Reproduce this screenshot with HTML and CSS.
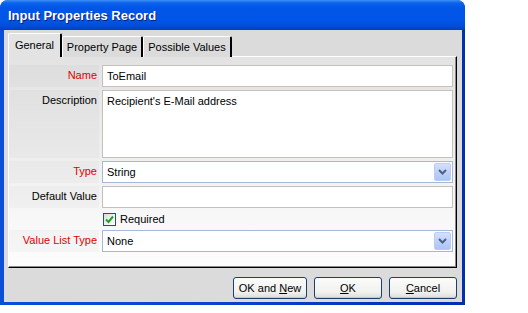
FILE: index.html
```html
<!DOCTYPE html>
<html lang="en">

<head>
    <meta charset="UTF-8">
    <title>Input Properties Record</title>
    <link rel="stylesheet" href="styles.css">
</head>

<body>
    <div class="window">
        <div class="titlebar">Input Properties Record</div>
        <div class="client">
            <div class="tabs">
                <div class="tab active tab-general">General</div>
                <div class="tab tab-page">Property Page</div>
                <div class="tab tab-values">Possible Values</div>
            </div>
            <div class="panel">
                <div class="label req">Name</div>
                <div class="field">ToEmail</div>

                <div class="label">Description</div>
                <div class="field memo">Recipient's E-Mail address</div>

                <div class="label req">Type</div>
                <div class="field combo">
                    <span>String</span>
                    <span class="drop"><svg width="9" height="6" viewBox="0 0 9 6"><path d="M1 1 L4.5 4.5 L8 1" fill="none" stroke="#4d6185" stroke-width="2"/></svg></span>
                </div>

                <div class="label">Default Value</div>
                <div class="field"></div>

                <div class="label blank"></div>
                <div class="check-row">
                    <span class="checkbox"><svg width="9" height="9" viewBox="0 0 9 9"><path d="M1 4.5 L3.5 7 L8 1.5" fill="none" stroke="#21a121" stroke-width="2"/></svg></span>
                    <span>Required</span>
                </div>

                <div class="label req">Value List Type</div>
                <div class="field combo">
                    <span>None</span>
                    <span class="drop"><svg width="9" height="6" viewBox="0 0 9 6"><path d="M1 1 L4.5 4.5 L8 1" fill="none" stroke="#4d6185" stroke-width="2"/></svg></span>
                </div>
            </div>
            <div class="buttons">
                <button class="btn btn-wide">OK and <u>N</u>ew</button>
                <button class="btn"><u>O</u>K</button>
                <button class="btn"><u>C</u>ancel</button>
            </div>
        </div>
    </div>
</body>

</html>
```

FILE: styles.css
```css
* {
    box-sizing: border-box;
    margin: 0;
    padding: 0;
}

body {
    background-color: #ffffff;
    font-family: "Liberation Sans", Arial, sans-serif;
    font-size: 11px;
    color: #000000;
}

.window {
    width: 465px;
    height: 305px;
    display: flex;
    flex-direction: column;
    background: linear-gradient(to right, #0a4fd6, #0842cc 50%, #0030b0);
    border-radius: 8px 8px 0 0;
    overflow: hidden;
}

.titlebar {
    height: 30px;
    flex: none;
    padding: 2px 0 0 8px;
    line-height: 28px;
    color: #ffffff;
    font-size: 13px;
    font-weight: bold;
    text-shadow: 1px 1px #0a1e7a;
    background: linear-gradient(to bottom, #3d8ff6 0, #0b62ea 3px, #0055e6 8px, #0056e8 20px, #004ed9 26px, #0040c0 30px);
}

.client {
    flex: 1;
    display: flex;
    flex-direction: column;
    margin: 0 3px 3px 4px;
    padding: 3px 5px 0 4px;
    background-color: #dbdbdb;
}

/* tabs */

.tabs {
    display: flex;
    align-items: flex-end;
    height: 24px;
    margin-bottom: -1px;
    position: relative;
    z-index: 1;
}

.tab {
    height: 21px;
    line-height: 20px;
    text-align: center;
    background-color: #dbdbdb;
    border-top: 1px solid #ffffff;
    border-left: 1px solid #ffffff;
    border-right: 2px solid #000000;
    border-radius: 2px 2px 0 0;
}

.tab.active {
    height: 24px;
    line-height: 22px;
    background-color: #e3e3e3;
}

.tab-general {
    width: 54px;
}

.tab-page {
    width: 81px;
}

.tab-values {
    width: 89px;
}

/* panel */

.panel {
    height: 212px;
    flex: none;
    display: grid;
    grid-template-columns: 90px 1fr;
    grid-template-rows: 22px 68px 22px 22px 16px 22px;
    column-gap: 3px;
    row-gap: 3px;
    padding: 8px 3px 0 0;
    border-top: 1px solid #ffffff;
    border-left: 1px solid #ffffff;
    border-right: 1px solid #000000;
    border-bottom: 1px solid #000000;
    box-shadow: inset -1px -1px #8a8a8a;
    background: linear-gradient(to bottom, #e3e3e3, #eeeeee 45%, #f7f7f7 75%, #fdfdfd);
}

.label {
    text-align: right;
    line-height: 21px;
    padding-right: 2px;
    background-color: rgba(0, 0, 0, 0.025);
}

.label.blank {
    background: none;
}

.req {
    color: #e00000;
}

.field {
    background-color: #ffffff;
    border: 1px solid #c3c1ba;
    padding: 0 4px;
    line-height: 20px;
    white-space: nowrap;
}

.memo {
    line-height: 18px;
    padding-top: 1px;
}

.combo {
    display: flex;
    align-items: center;
    justify-content: space-between;
    border-color: #a5b9d6;
    padding: 1px 1px 1px 4px;
}

.drop {
    width: 17px;
    height: 18px;
    display: flex;
    align-items: center;
    justify-content: center;
    border: 1px solid #bccdf4;
    border-radius: 2px;
    background: linear-gradient(to bottom, #d3e0fd, #bccef8 60%, #aec4f4);
}

.check-row {
    display: flex;
    align-items: center;
    gap: 4px;
    padding-left: 1px;
}

.checkbox {
    width: 13px;
    height: 13px;
    display: flex;
    align-items: center;
    justify-content: center;
    border: 1px solid #1c5180;
    background: linear-gradient(135deg, #dcdcd6, #f4f4f2 60%, #ffffff);
}

/* bottom buttons */

.buttons {
    flex: 1;
    display: flex;
    justify-content: flex-end;
    align-items: flex-start;
    gap: 7px;
    padding-top: 9px;
}

.btn {
    width: 68px;
    height: 22px;
    font-family: "Liberation Sans", Arial, sans-serif;
    font-size: 11px;
    color: #000000;
    border: 1px solid #1d3f6e;
    border-radius: 3px;
    background: linear-gradient(to bottom, #fbfbfb, #f1f1ef 70%, #dcdcd8);
    box-shadow: inset 0 -1px #c9c7c0;
}

.btn-wide {
    width: 74px;
}
```
